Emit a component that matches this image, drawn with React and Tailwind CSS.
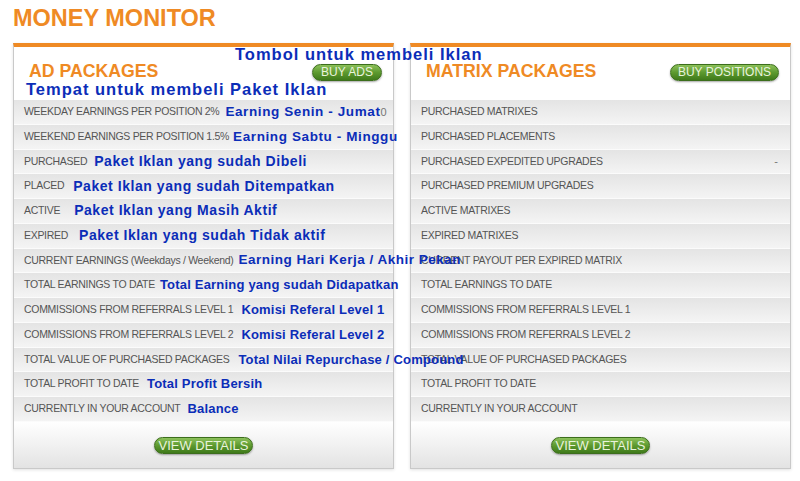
import React from "react";

const FONT = { fontFamily: '"Liberation Sans", Arial, sans-serif' };

const WIDE = "text-[13.5px] tracking-[0.6px]";
const PAKET = "text-[14px] tracking-[0.55px]";
const MID = "text-[13.5px] tracking-[0.5px]";
const NORMAL = "text-[13px] tracking-[0.2px]";

const adRows = [
  { label: "WEEKDAY EARNINGS PER POSITION 2%", note: "Earning Senin - Jumat", cls: `ml-[6px] ${WIDE}`, value: "0" },
  { label: "WEEKEND EARNINGS PER POSITION 1.5%", note: "Earning Sabtu - Minggu", cls: `ml-[4px] ${WIDE}` },
  { label: "PURCHASED", note: "Paket Iklan yang sudah Dibeli", cls: `ml-[7px] ${PAKET}` },
  { label: "PLACED", note: "Paket Iklan yang sudah Ditempatkan", cls: `ml-[9px] ${PAKET}` },
  { label: "ACTIVE", note: "Paket Iklan yang Masih Aktif", cls: `ml-[14px] ${PAKET}` },
  { label: "EXPIRED", note: "Paket Iklan yang sudah Tidak aktif", cls: `ml-[11px] ${PAKET}` },
  { label: "CURRENT EARNINGS (Weekdays / Weekend)", note: "Earning Hari Kerja / Akhir Pekan", cls: `ml-[5px] ${MID}` },
  { label: "TOTAL EARNINGS TO DATE", note: "Total Earning yang sudah Didapatkan", cls: `ml-[5px] ${NORMAL}` },
  { label: "COMMISSIONS FROM REFERRALS LEVEL 1", note: "Komisi Referal Level 1", cls: `ml-[8px] ${NORMAL}` },
  { label: "COMMISSIONS FROM REFERRALS LEVEL 2", note: "Komisi Referal Level 2", cls: `ml-[8px] ${NORMAL}` },
  { label: "TOTAL VALUE OF PURCHASED PACKAGES", note: "Total Nilai Repurchase / Compound", cls: `ml-[9px] ${NORMAL}` },
  { label: "TOTAL PROFIT TO DATE", note: "Total Profit Bersih", cls: `ml-[8px] ${NORMAL}` },
  { label: "CURRENTLY IN YOUR ACCOUNT", note: "Balance", cls: `ml-[7px] ${NORMAL}` },
];

const matrixRows = [
  { label: "PURCHASED MATRIXES" },
  { label: "PURCHASED PLACEMENTS" },
  { label: "PURCHASED EXPEDITED UPGRADES", value: "-" },
  { label: "PURCHASED PREMIUM UPGRADES" },
  { label: "ACTIVE MATRIXES" },
  { label: "EXPIRED MATRIXES" },
  { label: "CURRENT PAYOUT PER EXPIRED MATRIX" },
  { label: "TOTAL EARNINGS TO DATE" },
  { label: "COMMISSIONS FROM REFERRALS LEVEL 1" },
  { label: "COMMISSIONS FROM REFERRALS LEVEL 2" },
  { label: "TOTAL VALUE OF PURCHASED PACKAGES" },
  { label: "TOTAL PROFIT TO DATE" },
  { label: "CURRENTLY IN YOUR ACCOUNT" },
];

function GreenButton({ children, className = "" }) {
  return (
    <span
      className={`inline-flex h-[17px] items-center justify-center rounded-full border border-[#3c6e1c] bg-gradient-to-b from-[#8cc15a] via-[#5d9a2f] to-[#3f7a1a] leading-none text-[#e9f3dc] shadow-[0_1px_2px_rgba(0,0,0,0.35)] ${className}`}
    >
      {children}
    </span>
  );
}

function Row({ row }) {
  return (
    <div className="flex h-[24.75px] items-center whitespace-nowrap border-b border-[#fbfbfb] bg-gradient-to-b from-[#e4e4e4] to-[#f4f4f4] pl-[10px] pr-[12px]">
      <span className="text-[10.5px] tracking-[-0.3px] text-[#555]">{row.label}</span>
      {row.note && <span className={`${row.cls} font-bold text-[#0b2db8]`}>{row.note}</span>}
      {row.value && <span className="ml-auto text-[11px] text-[#777]">{row.value}</span>}
    </div>
  );
}

function Panel({ title, button, btnClass, rows, note, className = "" }) {
  return (
    <div
      className={`flex w-[381px] flex-col border-x border-b border-t-4 border-x-[#c9c9c9] border-b-[#c9c9c9] border-t-[#ef8a24] shadow-[0_1px_3px_rgba(0,0,0,0.12)] ${className}`}
    >
      <div className="flex h-[53px] flex-col bg-white pl-[15px] pr-[11px] pt-[16px]">
        <div className="flex h-[18px] items-center justify-between">
          <span className="text-[17.7px] font-bold leading-none text-[#ef8a24]">{title}</span>
          <GreenButton className={btnClass}>{button}</GreenButton>
        </div>
        {note && (
          <span className="-ml-[3px] -mt-[1px] whitespace-nowrap text-[16.5px] font-bold leading-[18px] tracking-[1px] text-[#0b2db8]">
            {note}
          </span>
        )}
      </div>
      <div className="flex flex-col">
        {rows.map((r) => (
          <Row key={r.label} row={r} />
        ))}
      </div>
      <div className="flex h-[46px] items-center justify-center bg-gradient-to-b from-white to-[#e3e3e3] pt-[2px]">
        <GreenButton className="w-[99px] text-[13px]">VIEW DETAILS</GreenButton>
      </div>
    </div>
  );
}

export default function App() {
  return (
    <div className="relative h-[481px] w-[800px] bg-white pl-[13px] pt-[7px]" style={FONT}>
      <h1 className="text-[23.5px] font-bold leading-[23px] text-[#ef8a24]">MONEY MONITOR</h1>
      <div className="mt-[13px] flex gap-[16px]">
        <Panel
          title="AD PACKAGES"
          button="BUY ADS"
          btnClass="w-[70px] text-[12px]"
          rows={adRows}
          note="Tempat untuk membeli Paket Iklan"
          className="relative z-10"
        />
        <Panel title="MATRIX PACKAGES" button="BUY POSITIONS" btnClass="w-[109px] text-[12px]" rows={matrixRows} />
      </div>
      <span className="absolute left-[235px] top-[45px] z-20 whitespace-nowrap text-[16.5px] font-bold leading-[18px] tracking-[1px] text-[#0b2db8]">
        Tombol untuk membeli Iklan
      </span>
    </div>
  );
}
